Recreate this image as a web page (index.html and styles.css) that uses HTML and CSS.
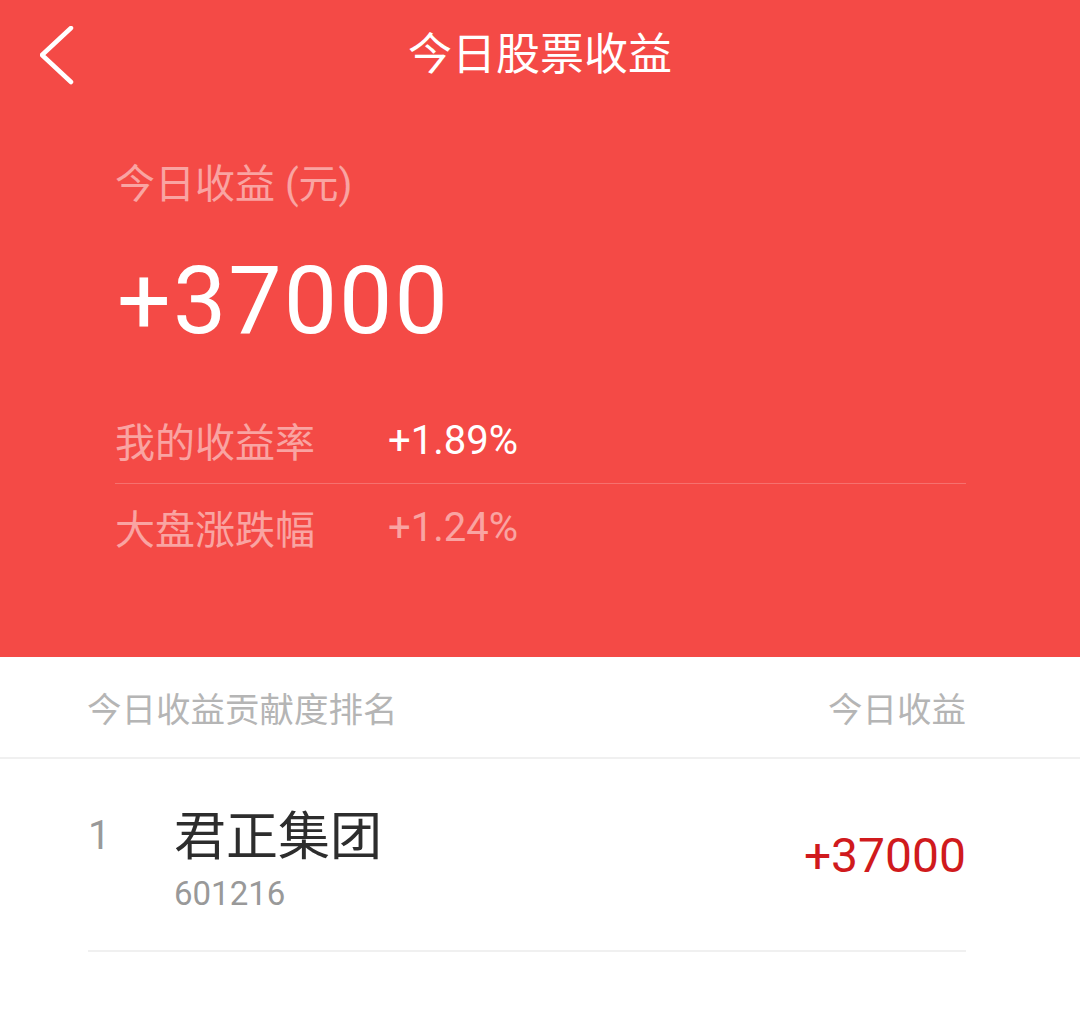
FILE: index.html
```html
<!DOCTYPE html>
<html lang="zh-CN">
<head>
    <meta charset="UTF-8">
    <meta name="viewport" content="width=device-width, initial-scale=1.0">
    <title>今日股票收益</title>
    <link rel="stylesheet" href="styles.css">
</head>
<body>
    <!-- Red summary panel -->
    <div class="hero">
        <div class="nav">
            <div class="nav-back">
                <svg width="40" height="60" viewBox="0 0 40 60">
                    <polyline points="31,2 2,29 31,56" fill="none" stroke="#fff" stroke-width="4.5" stroke-linecap="round" stroke-linejoin="round"/>
                </svg>
            </div>
            <div class="nav-title">今日股票收益</div>
            <div></div>
        </div>

        <div class="summary">
            <div class="summary-label">今日收益 (元)</div>
            <div class="summary-amount">+37000</div>

            <div class="stats">
                <div class="stat-row">
                    <span class="stat-label">我的收益率</span>
                    <span class="stat-value">+1.89%</span>
                </div>
                <div class="stat-row">
                    <span class="stat-label">大盘涨跌幅</span>
                    <span class="stat-value muted">+1.24%</span>
                </div>
            </div>
        </div>
    </div>

    <!-- Ranking list -->
    <div class="rank-head">
        <span>今日收益贡献度排名</span>
        <span>今日收益</span>
    </div>

    <div class="rank-list">
        <div class="rank-item">
            <div class="rank-no">1</div>
            <div class="rank-stock">
                <div class="stock-name">君正集团</div>
                <div class="stock-code">601216</div>
            </div>
            <div class="rank-profit">+37000</div>
        </div>
    </div>
</body>
</html>
```

FILE: styles.css
```css
body {
    margin: 0;
    padding: 0;
    font-family: Roboto, "Noto Sans CJK SC", sans-serif;
    background-color: #fff;
    color: #333;
}
.hero {
    background-color: #f44a46;
    color: #fff;
    padding-bottom: 87px;
}
.nav {
    display: grid;
    grid-template-columns: 1fr auto 1fr;
    align-items: center;
    height: 110px;
}
.nav-back {
    padding-left: 40px;
    display: flex;
    align-items: center;
    padding-top: 2px;
}
.nav-title {
    font-size: 44px;
    line-height: 110px;
}
.summary {
    padding: 0 114px 0 115px;
}
.summary-label {
    margin-top: 50px;
    font-size: 40px;
    line-height: 50px;
    color: rgba(255, 255, 255, 0.5);
}
.summary-amount {
    margin-top: 35px;
    font-size: 95px;
    line-height: 111px;
    letter-spacing: 2px;
    margin-left: 2px;
}
.stats {
    margin-top: 41px;
}
.stat-row {
    display: flex;
    align-items: center;
    height: 86px;
}
.stat-row:first-child {
    border-bottom: 1px solid rgba(255, 255, 255, 0.22);
}
.stat-label {
    width: 273px;
    font-size: 40px;
    color: rgba(255, 255, 255, 0.5);
}
.stat-value {
    font-size: 40px;
}
.stat-value.muted {
    color: rgba(255, 255, 255, 0.5);
}
.rank-head {
    display: flex;
    justify-content: space-between;
    align-items: center;
    height: 100px;
    padding: 0 114px 0 87px;
    font-size: 34.5px;
    color: #b5b5b5;
    border-bottom: 2px solid #f0f0f0;
}
.rank-list {
    padding: 0 114px 0 88px;
}
.rank-item {
    display: flex;
    align-items: center;
    height: 191px;
    border-bottom: 2px solid #f0f0f0;
}
.rank-no {
    width: 86px;
    font-size: 40px;
    color: #999;
    align-self: flex-start;
    margin-top: 53px;
}
.rank-stock {
    flex: 1;
    margin-top: 14px;
}
.stock-name {
    font-size: 52px;
    line-height: 64px;
    color: #2d2d2d;
}
.stock-code {
    font-size: 33px;
    line-height: 48px;
    color: #999;
}
.rank-profit {
    font-size: 48px;
    color: #d01a1d;
    margin-top: 2px;
}
```
